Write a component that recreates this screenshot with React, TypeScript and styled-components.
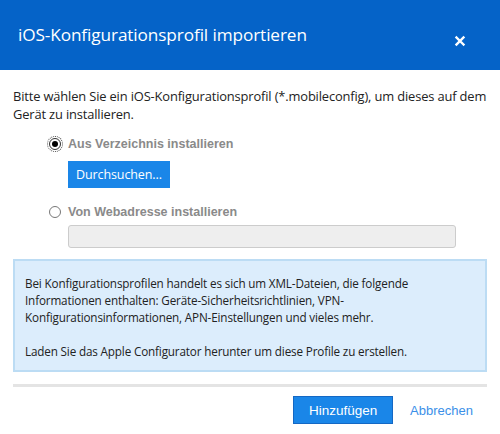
import React, {FC} from "react";
import styled, {createGlobalStyle} from "styled-components";

const BLUE = '#0563c8';
const BUTTON = '#1a86e8';
const SEGOE = '"Open Sans", "Noto Sans", sans-serif';
const ARIAL = '"Liberation Sans", Arial, sans-serif';

const Global = createGlobalStyle`
  html, body { margin: 0; padding: 0; background: #fff; }
  body { font-family: ${SEGOE}; color: #222; }
`;

const Dialog = styled.div`
  width: 500px;
  height: 434px;
  display: flex;
  flex-direction: column;
  background: #fff;
`;

const Header = styled.header`
  height: 70px;
  background: ${BLUE};
  display: flex;
  align-items: center;
  justify-content: space-between;
  padding: 0 34px 0 18px;
  box-sizing: border-box;
`;

const Title = styled.h1`
  margin: 0 0 2px;
  font-size: 17.2px;
  font-weight: 400;
  color: #fff;
  letter-spacing: -0.1px;
`;

const Close = styled.button`
  border: 0;
  background: none;
  padding: 0;
  margin-top: 12px;
  width: 12px;
  height: 12px;
  display: flex;
  cursor: pointer;
`;

const Body = styled.section`
  padding: 17px 13px 0;
  display: flex;
  flex-direction: column;
`;

const Intro = styled.p`
  margin: 0;
  font-size: 12.9px;
  line-height: 18px;
  letter-spacing: -0.15px;
`;

const Options = styled.div`
  margin: 14px 0 0 36px;
  display: flex;
  flex-direction: column;
`;

const OptionRow = styled.label<{top?: number}>`
  display: flex;
  align-items: center;
  height: 14px;
  margin-top: ${p => p.top ?? 0}px;
`;

const Radio = styled.span<{checked?: boolean; focused?: boolean}>`
  position: relative;
  width: 12px;
  height: 12px;
  border-radius: 50%;
  border: 1px solid ${p => p.checked ? '#333' : '#777'};
  box-sizing: border-box;
  margin-right: 7px;
  flex: none;
  outline: ${p => p.focused ? '1px dotted #444' : 'none'};
  outline-offset: 1px;
  &::after {
    content: '';
    display: ${p => p.checked ? 'block' : 'none'};
    position: absolute;
    left: 2px;
    top: 2px;
    width: 6px;
    height: 6px;
    border-radius: 50%;
    background: #000;
  }
`;

const OptionLabel = styled.span`
  font-family: ${ARIAL};
  font-weight: 700;
  font-size: 12.5px;
  color: #8a8a8a;
`;

const Indent = styled.div<{top: number}>`
  margin: ${p => p.top}px 0 0 19px;
`;

const Browse = styled.button`
  height: 27px;
  padding: 0 8px;
  border: 0;
  background: ${BUTTON};
  color: #fff;
  font-family: ${SEGOE};
  font-size: 12.5px;
  letter-spacing: -0.1px;
  cursor: pointer;
`;

const UrlInput = styled.input`
  display: block;
  width: 388px;
  height: 23px;
  box-sizing: border-box;
  border: 1px solid #cccccc;
  border-radius: 3px;
  background: #eeeeee;
`;

const Info = styled.div`
  margin-top: 11px;
  padding: 14px 10px 10px 10px;
  background: #dcedfc;
  border: 2px solid #bcdcf4;
  font-size: 11.7px;
  line-height: 17px;
  letter-spacing: -0.15px;
  & p { margin: 0; }
  & p + p { margin-top: 17px; }
`;

const Divider = styled.hr`
  margin: 12px 13px 0;
  border: 0;
  height: 3px;
  background: #e4e4e4;
`;

const Footer = styled.footer`
  display: flex;
  justify-content: flex-end;
  align-items: center;
  gap: 17px;
  padding: 9px 27px 0 0;
`;

const Primary = styled.button`
  width: 100px;
  height: 28px;
  background: ${BUTTON};
  border: 1px solid #1468c4;
  color: #fff;
  font-family: ${ARIAL};
  font-size: 13.5px;
  cursor: pointer;
`;

const Link = styled.button`
  border: 0;
  background: none;
  padding: 0;
  color: #3b8fe8;
  font-family: ${ARIAL};
  font-size: 13px;
  cursor: pointer;
`;

const App: FC = () => (
  <Dialog>
    <Global/>
    <Header>
      <Title>iOS-Konfigurationsprofil importieren</Title>
      <Close aria-label="Schließen">
        <svg width="12" height="12" viewBox="0 0 12 12">
          <path d="M2.5 2.5 L9.5 9.5 M9.5 2.5 L2.5 9.5" stroke="#fff" strokeWidth="2.4" strokeLinecap="square"/>
        </svg>
      </Close>
    </Header>
    <Body>
      <Intro>
        Bitte wählen Sie ein iOS-Konfigurationsprofil (*.mobileconfig), um dieses auf dem Gerät zu installieren.
      </Intro>
      <Options>
        <OptionRow>
          <Radio checked focused/>
          <OptionLabel>Aus Verzeichnis installieren</OptionLabel>
        </OptionRow>
        <Indent top={10}>
          <Browse>Durchsuchen...</Browse>
        </Indent>
        <OptionRow top={17}>
          <Radio/>
          <OptionLabel>Von Webadresse installieren</OptionLabel>
        </OptionRow>
        <Indent top={6}>
          <UrlInput disabled/>
        </Indent>
      </Options>
      <Info>
        <p>Bei Konfigurationsprofilen handelt es sich um XML-Dateien, die folgende Informationen enthalten: Geräte-Sicherheitsrichtlinien, VPN-Konfigurationsinformationen, APN-Einstellungen und vieles mehr.</p>
        <p>Laden Sie das Apple Configurator herunter um diese Profile zu erstellen.</p>
      </Info>
    </Body>
    <Divider/>
    <Footer>
      <Primary>Hinzufügen</Primary>
      <Link>Abbrechen</Link>
    </Footer>
  </Dialog>
);

export default App;
